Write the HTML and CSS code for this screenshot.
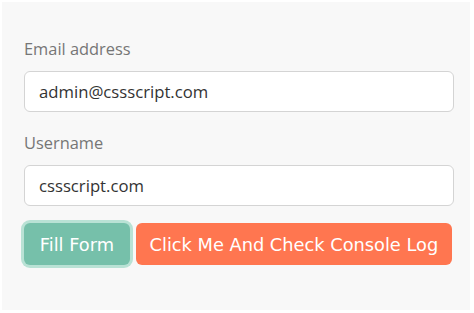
FILE: index.html
```html
<!DOCTYPE html>
<html>
<head>
<meta charset="utf-8">
<link rel="stylesheet" href="styles.css">
</head>
<body>
<div class="panel">
  <form class="form">
    <label class="label" for="email">Email address</label>
    <input class="input" id="email" type="text" value="admin@cssscript.com">
    <label class="label label-2" for="user">Username</label>
    <input class="input" id="user" type="text" value="cssscript.com">
    <div class="actions">
      <button type="button" class="btn btn-fill">Fill Form</button>
      <button type="button" class="btn btn-click">Click Me And Check Console Log</button>
    </div>
  </form>
</div>
</body>
</html>
```
FILE: styles.css
```css
html, body {
  margin: 0;
  padding: 0;
  background: #ffffff;
}
.panel {
  margin: 2px 4px 3px 2px;
  height: 308px;
  box-sizing: border-box;
  background: #f8f8f8;
  padding: 36px 18px 0 22px;
}
.form {
  display: flex;
  flex-direction: column;
}
.label {
  font-family: "Open Sans", sans-serif;
  font-size: 16.4px;
  color: #767676;
  line-height: 22px;
  margin-bottom: 11px;
}
.label-2 {
  margin-top: 20px;
}
.input {
  box-sizing: border-box;
  height: 41px;
  width: 430px;
  border: 1.5px solid #d4d4d4;
  border-radius: 6px;
  background: #fff;
  padding: 0 14px;
  font-family: "Open Sans", sans-serif;
  font-size: 16.7px;
  color: #333333;
  outline: none;
}
.actions {
  display: flex;
  gap: 6px;
  margin-top: 17px;
}
.btn {
  height: 42px;
  border: none;
  border-radius: 6px;
  color: #ffffff;
  font-family: "DejaVu Sans", sans-serif;
  font-size: 17.8px;
  padding: 0 10px;
}
.btn-fill {
  background: #76c0aa;
  box-shadow: 0 0 0 3px #b9e2d5;
  width: 106px;
}
.btn-click {
  background: #ff7650;
  width: 317px;
}
```
